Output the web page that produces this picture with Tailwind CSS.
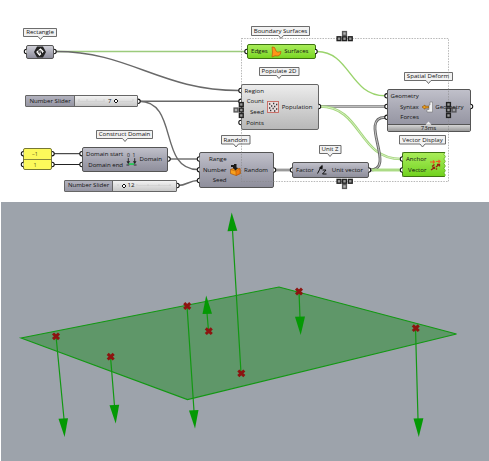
<!DOCTYPE html>
<html lang="en">
<head>
<meta charset="utf-8">
<title>Node graph</title>
<script src="https://cdn.jsdelivr.net/npm/@tailwindcss/browser@4"></script>
</head>
<body class="bg-white">
<div class="w-[489px] h-[461px] overflow-hidden flex flex-col font-['Open_Sans',sans-serif] font-medium text-[6.1px] leading-[10.5px] text-[#111] whitespace-nowrap">
<main class="relative h-[202px] shrink-0">

<!-- wires -->
<svg class="absolute inset-0" width="489" height="202" fill="none" stroke="#696969" stroke-width="1.4">
<path d="M56 51.5H246" stroke="#9ccb7c"/>
<path d="M56 51.5C130 51.5 160 90.5 239 90.5"/>
<path d="M139 101.3H240"/>
<path d="M139 101.3C179 101.3 158 169.5 198 169.5"/>
<path d="M53 153.7H80M53 164.5H80" stroke="#222" stroke-width="1"/>
<path d="M169 159H198"/>
<path d="M178 185.5C187 185.5 189 180.5 198 180.5"/>
<path d="M317 51.5C350 51.5 350 95.8 385 95.8" stroke="#9ad36c"/>
<path d="M320 106.5H385" stroke="#777" stroke-width="2.6"/><path d="M320 106.5H385" stroke="#ddd" stroke-width=".7"/>
<path d="M320 106.5C362 106.5 358 159 401 159" stroke="#a4d77c" stroke-width="2.6"/><path d="M320 106.5C362 106.5 358 159 401 159" stroke="#e3f3d6" stroke-width=".8"/>
<path d="M275 170H291" stroke="#777" stroke-width="2.6"/><path d="M275 170H291" stroke="#ddd" stroke-width=".7"/>
<path d="M370 170C397 170 358 117.3 385 117.3" stroke="#666" stroke-width="2.8"/><path d="M370 170C397 170 358 117.3 385 117.3" stroke="#ddd" stroke-width=".8"/>
<path d="M372 170H401" stroke="#9ad36c" stroke-width="2.8"/><path d="M372 170H401" stroke="#c8e8b0" stroke-width=".8"/>
</svg>

<!-- nodes -->
<section class="absolute left-[26px] top-[45px] w-[28px] h-[14px] border border-[#555] rounded-[2px] bg-linear-to-b from-[#d0d0d8] to-[#8e8e9c] flex items-center justify-center">
<svg width="12" height="12" viewBox="0 0 12 12"><path d="M3 .5H9L12 6 9 11.5H3L0 6Z" fill="#222"/><path d="M3 6 6.500 3 9 5.500 5.500 9Z" fill="#777" stroke="#fff" stroke-width="1.2"/><path d="M5 4 5 6M7.500 6V8" stroke="#222"/></svg>
</section>

<section class="absolute left-[25px] top-[95px] w-[113px] h-[12px] border border-[#666] rounded-[1px] bg-linear-to-b from-[#f3f3f3] to-[#c8c8c8] flex items-center">
<div class="w-[49px] h-full border-r border-[#666] bg-linear-to-b from-[#b2b2be] to-[#9696a3] flex items-center justify-center">Number Slider</div>
<div class="flex-1 flex items-center pl-[33px] gap-[2px]"><span>7</span><svg width="6" height="6"><path d="M3 1 5 3 3 5 1 3Z" fill="#fff" stroke="#111" stroke-width="1"/></svg></div>
</section>

<section class="absolute left-[23px] top-[148px] w-[29px] h-[22px] border border-[#777733] rounded-[2px] bg-[#fcf95b] flex flex-col text-center text-[5.5px] text-[#55551a]">
<div class="h-[11px] border-b border-[#88883a] pr-[5px]">–1</div><div class="pr-[5px]">1</div>
</section>

<section class="absolute left-[82px] top-[147px] w-[86px] h-[25px] border border-[#555] rounded-[2px] bg-linear-to-b from-[#c0c0ca] via-[#a5a5b1] to-[#8f8f9c] flex items-center pl-[3px] pr-[5px] justify-between">
<div class="text-right"><div>Domain start</div><div>Domain end</div></div>
<svg class="ml-[1px] overflow-visible" width="11" height="13" viewBox="0 0 12 13" fill="none" stroke="#222"><text x="1" y="4" font-size="5.5" fill="#111" stroke="none">0</text><text x="7" y="4" font-size="5.5" fill="#111" stroke="none">1</text><path d="M2.500 5V11M9.500 5V11" stroke-width="1"/><path d="M.5 8.500 2.500 11.500 4.500 8.500ZM7.500 8.500 9.500 11.500 11.500 8.500Z" fill="#222" stroke="none"/><path d="M3 11.500H9" stroke="#27c957" stroke-width="2"/><path d="M.5 12.500H3.500M8.500 12.500H11.500"/></svg>
<div>Domain</div>
</section>

<section class="absolute left-[64px] top-[179.5px] w-[113px] h-[12px] border border-[#666] rounded-[1px] bg-linear-to-b from-[#f3f3f3] to-[#c8c8c8] flex items-center">
<div class="w-[48px] h-full border-r border-[#666] bg-linear-to-b from-[#b2b2be] to-[#9696a3] flex items-center justify-center">Number Slider</div>
<div class="flex-1 flex items-center pl-[7.5px] gap-px"><svg width="6" height="6"><path d="M3 1 5 3 3 5 1 3Z" fill="#fff" stroke="#111" stroke-width="1"/></svg><span>12</span></div>
</section>

<section class="absolute left-[199px] top-[152px] w-[75px] h-[36px] border border-[#555] rounded-[2px] bg-linear-to-b from-[#c0c0ca] via-[#a5a5b1] to-[#8f8f9c] flex items-center justify-between pl-[3px] pr-[5px]">
<div class="text-right leading-[10.7px]"><div>Range</div><div>Number</div><div>Seed</div></div>
<svg class="ml-[1px]" width="11" height="12"><path d="M.5 5.500 3 4.500 10 4.500 10.500 9.500 6 11.500 .5 9.500Z" fill="#f8a01c" stroke="#a34e05" stroke-width=".6"/><path d="M.5 5.500 6 7 10 4.500V9.500L6 11.500V7" stroke="#a94e06" stroke-width=".5" fill="#f07c10"/><path d="M1 1H4V0H6.500V3.500L8 4 5.500 6.500 3 4V3H1Z" fill="#1b1a18"/></svg>
<div>Random</div>
</section>

<section class="absolute left-[292px] top-[162px] w-[77px] h-[16px] border border-[#555] rounded-[2px] bg-linear-to-b from-[#c0c0ca] via-[#a5a5b1] to-[#8f8f9c] flex items-center justify-between pl-[3px] pr-[5px]">
<div>Factor</div>
<svg width="11" height="12" fill="none" stroke="#111" stroke-width="1"><path d="M.5 9.500 4 3"/><path d="M2.500 4 5.200 1.500 5 5Z" fill="#111"/><path d="M5.500 6H9L5.500 10H9.500"/></svg>
<div>Unit vector</div>
</section>

<section class="absolute left-[247px] top-[44px] w-[68.5px] h-[15px] border border-[#3d7410] rounded-[2px] bg-linear-to-b from-[#a9ed58] to-[#7ad620] flex items-center justify-between pl-[3px] pr-[5px]">
<div>Edges</div>
<svg class="ml-px" width="11" height="12"><path d="M1 1Q4 0 5 5 6 7 10 5.500 10 9 7 10 4 9 1 11 2 6 1 1Z" fill="#ff9418" stroke="#b65b08" stroke-width=".7"/></svg>
<div class="pr-px">Surfaces</div>
</section>

<section class="absolute left-[240.5px] top-[84px] w-[78px] h-[46px] border border-[#666] rounded-[2px] bg-linear-to-b from-[#ececec] to-[#b8b8b8] flex items-center justify-between pl-[3px] pr-[5px]">
<div class="text-right leading-[10.7px]"><div>Region</div><div>Count</div><div>Seed</div><div>Points</div></div>
<svg width="12" height="12"><rect x=".5" y=".5" width="11" height="11" fill="#e8dddd" stroke="#c7665d" stroke-width=".9"/><path d="M2 3h1.300M6 2.500h1.300M9 3.500h1.300M4 5h1.300M7 5.500h1.300M2 7h1.300M5.500 7.500h1.300M9 8h1.300M3 9.500h1.300M7 10h1.300" stroke="#333" stroke-width="1.3"/></svg>
<div>Population</div>
</section>

<section class="absolute left-[386.5px] top-[89px] w-[84px] h-[43px] border border-[#555] rounded-[2px] bg-linear-to-b from-[#c0c0ca] via-[#a5a5b1] to-[#8f8f9c] flex flex-col">
<div class="h-[35px] flex items-center justify-between pl-[3px] pr-[6px]">
<div class="text-right leading-[10.7px]"><div>Geometry</div><div>Syntax</div><div>Forces</div></div>
<svg class="ml-[2px]" width="12" height="12"><path d="M8 1H10.500V11H5V8.500H7V4H8Z" fill="#f2f2f2" stroke="#666" stroke-width=".5"/><path d="M0 6 3 4V5.200H6.500V7H3V8.200Z" fill="#f0a01a" stroke="#8a5209" stroke-width=".6"/></svg>
<div>Geometry</div>
</div>
<div class="flex-1 border-t border-[#555] bg-linear-to-b from-[#d5d5d5] to-[#9b9b9b] text-center leading-[6px]">73ms</div>
</section>

<section class="absolute left-[402px] top-[152px] w-[43px] h-[25px] border border-[#3d7410] border-r-0 rounded-l-[2px] bg-linear-to-b from-[#a9ed58] to-[#72d21c] flex items-center pl-[3px] gap-[4px]">
<div class="text-right"><div>Anchor</div><div>Vector</div></div>
<svg width="11" height="12" fill="none" stroke="#9c1c10" stroke-width="1.300"><path d="M0 3H4M3 1.500 4.500 3 3 4.500M6 2.500H9.500M8.500 1 10 2.500 8.500 4" stroke="#f05c20" stroke-width="1.100"/><path d="M2 7.500 4.500 5.500M6 8 9 5.500M1 11 4 9M6 10.500 7 9.500"/><path d="M7 5.500H9.500V7.500M2.500 8.500H4.500V10"/></svg>
</section>

<!-- title balloons -->
<svg class="absolute inset-0 z-10" width="489" height="202" fill="#f2f2f2" stroke="#5c5c5c" stroke-width=".9">
<path d="M23.5 28.5H56.5V36.5H43L40.5 39.5 38 36.5H23.5Z"/>
<path d="M251.5 26.5H309.5V35.5H283.5L281 38.5 278.500 35.5H251.5Z"/>
<path d="M259.5 67.5H299V75.5H281.5L279 78.5 276.5 75.5H259.5Z"/>
<path d="M404.5 72.500H452.5V80.500H431L428.500 83.500 426 80.500H404.5Z"/>
<path d="M96.5 130.5H152.500V138.500H127.500L125 141.500 122.500 138.500H96.5Z"/>
<path d="M221.5 135.500H250V144H238.500L236 147 233.500 144H221.5Z"/>
<path d="M319.500 145.500H341V153.500H332.500L330 156.500 327.500 153.500H319.5Z"/>
<path d="M399.500 135.500H445.500V144H425L422.500 147 420 144H399.5Z"/>
</svg>
<div class="absolute z-20 left-[23px] top-[27px] w-[34px] flex justify-center">Rectangle</div>
<div class="absolute z-20 left-[251px] top-[25.5px] w-[59px] flex justify-center">Boundary Surfaces</div>
<div class="absolute z-20 left-[259px] top-[66px] w-[40px] flex justify-center">Populate 2D</div>
<div class="absolute z-20 left-[404px] top-[71px] w-[48px] flex justify-center">Spatial Deform</div>
<div class="absolute z-20 left-[96px] top-[129px] w-[57px] flex justify-center">Construct Domain</div>
<div class="absolute z-20 left-[221px] top-[134.5px] w-[29px] flex justify-center">Random</div>
<div class="absolute z-20 left-[319px] top-[144px] w-[22px] flex justify-center">Unit Z</div>
<div class="absolute z-20 left-[399px] top-[134.5px] w-[47px] flex justify-center">Vector Display</div>

<!-- grips, slider ticks, group outline and its handles -->
<svg class="absolute inset-0 z-20" width="489" height="202" fill="none">
<defs>
<path id="in" d="M0 -2.200A2.200 2.200 0 0 0 0 2.200" fill="#fff" stroke="#111" stroke-width="1.1"/>
<path id="out" d="M0 -2.200A2.200 2.200 0 0 1 0 2.200" fill="#fff" stroke="#111" stroke-width="1.1"/>
<rect id="key" x="-1.900" y="-1.900" width="3.800" height="3.800" fill="#999" stroke="#222" stroke-width="1.4"/>
</defs>
<use href="#in" x="26.500" y="51.500"/><use href="#out" x="54" y="51.500"/>
<use href="#out" x="138" y="101.300"/><use href="#out" x="177" y="185.500"/>
<use href="#in" x="23.500" y="153.700"/><use href="#out" x="52" y="153.700"/>
<use href="#in" x="23.500" y="164.500"/><use href="#out" x="52" y="164.500"/>
<use href="#in" x="82" y="153.700"/><use href="#in" x="82" y="164.500"/><use href="#out" x="168" y="159"/>
<use href="#in" x="199.500" y="159"/><use href="#in" x="199.500" y="169.700"/><use href="#in" x="199.500" y="180.500"/><use href="#out" x="273.500" y="170"/>
<use href="#in" x="292.500" y="170"/><use href="#out" x="368.500" y="170"/>
<use href="#in" x="247" y="51.500"/><use href="#out" x="315" y="51.500"/>
<use href="#in" x="241" y="90.500"/><use href="#in" x="241" y="101.300"/><use href="#in" x="241" y="122.500"/><use href="#out" x="318.500" y="106.500"/>
<use href="#in" x="387" y="95.800"/><use href="#in" x="387" y="106.500"/><use href="#in" x="387" y="117.300"/><use href="#out" x="470.500" y="106.500"/>
<use href="#in" x="402.500" y="159"/><use href="#in" x="402.500" y="170"/>
<path d="M78 101.500H105M119 101.500H133M138 185.500H171" stroke="#ccc" stroke-width=".6"/>
<path d="M79 99V101M87 99V101M96 99V101M104 99V101M133 99V101M118 186V184M137 186V184M148 186V184M159 186V184M170 186V184" stroke="#c4c4c4" stroke-width=".6"/>
<path d="M425.500 124.800 428.500 121.500 431.500 124.800Z" fill="#eee"/>
<path d="M446 152 444 154.300 446 156.600 444 159 446 161.300 444 163.600 446 166 444 168.300 446 170.600 444 173 446 175 444.500 177.500H448V152Z" fill="#fff"/>
<path d="M445 152.500 443.800 154.300 445.500 156.600 443.800 159 445.500 161.300 443.800 163.600 445.500 166 443.800 168.300 445.500 170.600 443.800 173 445.500 175 444 177" stroke="#5da525" stroke-width=".7"/>
<rect x="241.500" y="38.500" width="207" height="143" stroke="#888" stroke-opacity=".75" stroke-width=".8" stroke-dasharray="1.500 1.200"/>
<use href="#key" x="344.500" y="33.500" opacity=".75"/><use href="#key" x="339" y="38.700"/><use href="#key" x="344.500" y="38.700"/><use href="#key" x="350.300" y="38.700"/>
<use href="#key" x="344.500" y="186.500" opacity=".75"/><use href="#key" x="339" y="181.300"/><use href="#key" x="344.500" y="181.300"/><use href="#key" x="350.300" y="181.300"/>
<use href="#key" x="236" y="110" opacity=".75"/><use href="#key" x="241.300" y="104.500"/><use href="#key" x="241.300" y="110"/><use href="#key" x="241.300" y="115.500"/>
<use href="#key" x="454" y="110" opacity=".6"/><use href="#key" x="448.500" y="104.500"/><use href="#key" x="448.500" y="110"/><use href="#key" x="448.500" y="115.500"/>
</svg>
</main>

<!-- 3D viewport -->
<div class="ml-px flex-1 bg-[#9da3ab]">
<svg width="488" height="259" viewBox="1 202 488 259" fill="none" stroke="#129812" stroke-width="1.2">
<defs>
<path id="pt" d="M-3 -2.800 3 2.800M3 -2.800 -3 2.800" stroke="#8c1410" stroke-width="3"/>
</defs>
<path d="M21 338 279 287 456.500 334 187.500 399.500Z" fill="#5f9769"/>
<path d="M56 336 64 419M110.500 356.500 114.500 406M187 306 194 411M208.500 331 207 313M241 373 232.500 230M299 291.500 300 318M415.500 328 418 419"/>
<g fill="#049904" stroke="none">
<path d="M58.500 418.800 68 418.200 64.600 437Z"/>
<path d="M109.500 405.200 119.200 404.800 115.700 423.500Z"/>
<path d="M189 410.500 198.500 410 195 428.500Z"/>
<path d="M202.500 314 212 313.700 206.200 295.500Z"/>
<path d="M227.500 231.200 237.300 230.800 231.700 212.500Z"/>
<path d="M295 316.800 305 316.400 300.700 335Z"/>
<path d="M413.500 418.500 423.400 418.300 418.800 437Z"/>
</g>
<use href="#pt" x="56" y="336.300"/><use href="#pt" x="110.700" y="356.700"/><use href="#pt" x="187.200" y="306"/><use href="#pt" x="208.800" y="331.200"/><use href="#pt" x="241.300" y="373.300"/><use href="#pt" x="299" y="291.500"/><use href="#pt" x="415.800" y="328.200"/>
</svg>
</div>
</div>
</body>
</html>
